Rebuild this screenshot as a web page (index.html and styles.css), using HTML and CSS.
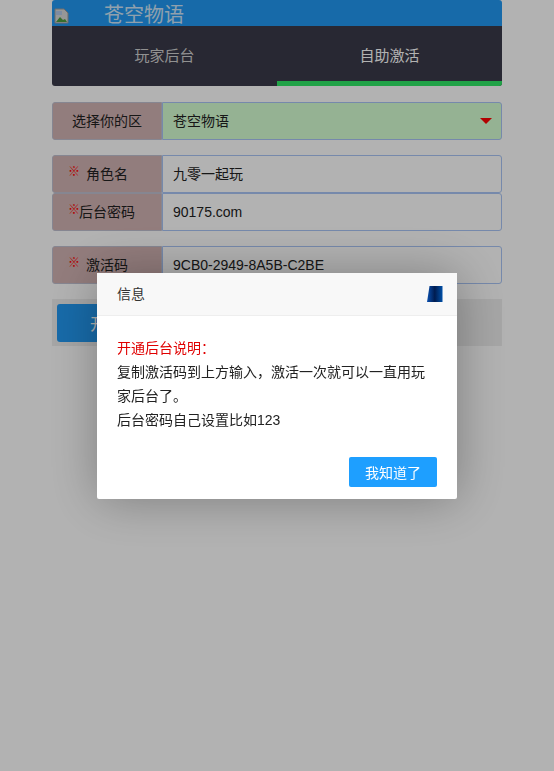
FILE: index.html
```html
<!DOCTYPE html>
<html lang="zh-CN">
<head>
    <meta charset="UTF-8">
    <meta name="viewport" content="width=device-width, initial-scale=1.0">
    <title>自助激活</title>
    <link rel="stylesheet" href="styles.css">
</head>
<body>
    <div class="page">
        <div class="top-bar">
            <svg class="broken-img" width="16" height="16" viewBox="0 0 16 16">
                <path d="M1 1h9l4 4v10H1z" fill="#d8d8d8" stroke="#9a9a9a"/>
                <path d="M2 14l4-5 3 3 2-1 2 3z" fill="#4f9e3f"/>
                <path d="M2 3h6v4H2z" fill="#b5c9e8"/>
            </svg>
            <span class="top-title">苍空物语</span>
        </div>

        <div class="tabs">
            <div class="tab">玩家后台</div>
            <div class="tab tab-active">自助激活</div>
        </div>

        <div class="form-row row-select">
            <div class="row-label">选择你的区</div>
            <div class="row-value">
                苍空物语
                <span class="arrow"></span>
            </div>
        </div>

        <div class="form-group">
            <div class="form-row">
                <div class="row-label"><span class="req">※</span>角色名</div>
                <div class="row-value">九零一起玩</div>
            </div>
            <div class="form-row">
                <div class="row-label"><span class="req">※</span>后台密码</div>
                <div class="row-value">90175.com</div>
            </div>
        </div>

        <div class="form-row row-code">
            <div class="row-label"><span class="req">※</span>激活码</div>
            <div class="row-value">9CB0-2949-8A5B-C2BE</div>
        </div>

        <div class="submit-row">
            <button class="btn-submit">开通后台</button>
        </div>
    </div>

    <div class="shade"></div>

    <div class="dialog">
        <div class="dialog-title">
            <span>信息</span>
            <svg class="dialog-icon" width="16" height="16" viewBox="0 0 16 16">
                <defs>
                    <linearGradient id="iconFill" x1="0" y1="0" x2="1" y2="0">
                        <stop offset="0" stop-color="#0a50b0"/>
                        <stop offset="0.5" stop-color="#001c50"/>
                        <stop offset="1" stop-color="#0050a8"/>
                    </linearGradient>
                </defs>
                <path d="M2.5 0H15.5V16H0z" fill="url(#iconFill)"/>
            </svg>
        </div>
        <div class="dialog-body">
            <div class="note-title">开通后台说明：</div>
            <div>复制激活码到上方输入，激活一次就可以一直用玩家后台了。</div>
            <div>后台密码自己设置比如123</div>
        </div>
        <div class="dialog-foot">
            <button class="btn-ok">我知道了</button>
        </div>
    </div>
</body>
</html>
```

FILE: styles.css
```css
* {
    margin: 0;
    padding: 0;
    box-sizing: border-box;
    font-family: "Liberation Sans", "Noto Sans CJK SC", sans-serif;
}

body {
    background: #fff;
    color: #222;
    font-size: 14px;
    height: 771px;
    overflow: hidden;
}

.page {
    width: 450px;
    margin: 0 auto;
}

.top-bar {
    height: 26px;
    background: #2299f2;
    border-radius: 3px 3px 0 0;
    color: #cfe6f8;
    font-size: 20px;
    line-height: 30px;
    display: flex;
    overflow: hidden;
}

.broken-img {
    margin: 8px 0 0 2px;
}

.top-title {
    margin-left: 34px;
}

.tabs {
    height: 60px;
    background: #3a3a49;
    border-radius: 0 0 3px 3px;
    display: flex;
    margin-bottom: 16px;
    overflow: hidden;
}

.tab {
    flex: 1;
    text-align: center;
    font-size: 15px;
    line-height: 60px;
    color: #d0d0d0;
}

.tab-active {
    color: #fff;
    border-bottom: 5px solid #30e866;
}

.form-group {
    margin-bottom: 15px;
}

.form-row {
    display: flex;
    height: 38px;
}

.row-select,
.row-code {
    margin-bottom: 15px;
}

.row-label {
    position: relative;
    width: 110px;
    background: #d2b3b3;
    border: 1px solid #c0c0d0;
    border-radius: 3px 0 0 3px;
    text-align: center;
    line-height: 37px;
}

.req {
    position: absolute;
    left: 15px;
    top: -2px;
    color: #f00;
    font-size: 12px;
    font-weight: bold;
}

.row-value {
    position: relative;
    flex: 1;
    border: 1px solid #a9c4f5;
    border-radius: 0 3px 3px 0;
    padding-left: 10px;
    line-height: 37px;
}

.row-select .row-value {
    background: #d6ffd3;
}

.arrow {
    position: absolute;
    right: 9px;
    top: 15px;
    border-left: 6px solid transparent;
    border-right: 6px solid transparent;
    border-top: 6px solid #f00;
}

.submit-row {
    height: 47px;
    background: #eee;
    padding: 5px;
}

.btn-submit {
    width: 130px;
    height: 38px;
    background: #2299f2;
    border: none;
    border-radius: 3px;
    color: #fff;
    font-size: 16px;
}

.shade {
    position: fixed;
    top: 0;
    left: 0;
    width: 100%;
    height: 100%;
    background: rgba(0, 0, 0, 0.3);
}

.dialog {
    position: fixed;
    top: 273px;
    left: 97px;
    width: 360px;
    background: #fff;
    border-radius: 2px;
    box-shadow: 1px 1px 50px rgba(0, 0, 0, 0.3);
}

.dialog-title {
    height: 43px;
    background: #f8f8f8;
    border-bottom: 1px solid #eee;
    padding: 0 14px 0 20px;
    line-height: 42px;
    color: #333;
    display: flex;
    justify-content: space-between;
    align-items: center;
}

.dialog-body {
    padding: 20px 20px 25px;
    line-height: 24px;
    color: #222;
}

.note-title {
    color: #e00000;
}

.dialog-foot {
    display: flex;
    justify-content: flex-end;
    padding: 0 20px 12px;
}

.btn-ok {
    width: 88px;
    height: 30px;
    background: #1e9fff;
    border: none;
    border-radius: 2px;
    color: #fff;
    font-size: 14px;
}
```
